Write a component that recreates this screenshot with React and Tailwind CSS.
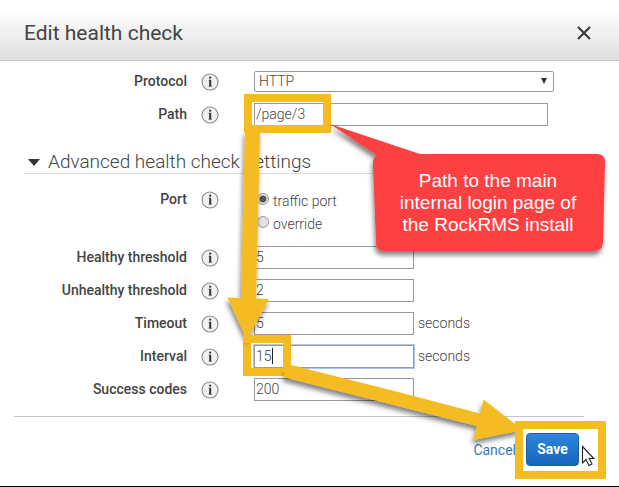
import { useState } from 'react';

function InfoIcon() {
    return (
        <svg viewBox="0 0 18 18" className="ml-[14px] mr-[35px] h-[18px] w-[18px] shrink-0" role="img" aria-label="Info">
            <circle cx="9" cy="9" r="8" fill="#f1f1f1" stroke="#888" strokeWidth="1.1" />
            <path d="M9.200 6.800v6.700" fill="none" stroke="#333" strokeWidth="2" />
            <path d="M7.600 7.300h1.600M7.600 13.200h3.300" fill="none" stroke="#555" strokeWidth="0.8" />
            <circle cx="9.2" cy="4.7" r="1.1" fill="#333" />
        </svg>
    );
}

function Row({ label, id, children }) {
    return (
        <div className="flex h-[33px] items-center">
            <label htmlFor={id} className="w-[187px] shrink-0 pb-0.5 text-right font-medium text-[#444]">
                {label}
            </label>
            <InfoIcon />
            {children}
        </div>
    );
}

const inputStyle = 'h-[23px] border border-[#999] bg-white pb-0.5 pl-px font-light text-[#444] outline-none';

function NumberRow({ label, id, value, unit, active }) {
    return (
        <Row label={label} id={id}>
            <input
                id={id}
                type="text"
                defaultValue={value}
                className={inputStyle + ' w-[160px]' + (active ? ' border-[#5b8fc4] ring-1 ring-[#a9c8e6]' : '')}
            />
            {unit && <span className="ml-1 pb-0.5 font-light text-[#444]">{unit}</span>}
        </Row>
    );
}

function PortOption({ value, port, onChange }) {
    return (
        <label className="flex h-[23px] items-center gap-1 font-light text-[#444]">
            <input
                type="radio"
                name="port"
                value={value}
                checked={port === value}
                onChange={() => onChange(value)}
                className="mb-1 ml-[3px] h-3 w-3 appearance-none rounded-full border border-[#999] bg-[#e4e4e4] checked:bg-[radial-gradient(circle,#555_0_3px,#e8e8e8_4px)]"
            />
            {value}
        </label>
    );
}

// Highlights, arrows and callout drawn on top of the dialog
function Annotations() {
    return (
        <div className="pointer-events-none absolute left-0 top-0">
            <svg width="619" height="487" viewBox="0 0 619 487" className="block">
                <defs>
                    <filter id="shadow" x="-20%" y="-20%" width="140%" height="140%">
                        <feDropShadow dx="-1" dy="4" stdDeviation="2.5" floodColor="#000" floodOpacity="0.5" />
                    </filter>
                </defs>
                <path d="M272.5 348v16" stroke="#222" strokeWidth="1" />
                <g fill="none" stroke="#f4bc20" strokeWidth="8">
                    <rect x="248" y="98" width="79" height="31" />
                    <rect x="247" y="339" width="40" height="33" />
                    <rect x="519" y="425" width="83" height="50" />
                </g>
                <g fill="#f4bc20" filter="url(#shadow)">
                    <path d="M245 131h15L256 298.500 269 299 247 340 227.500 297.500 241 298z" />
                    <path d="M289 364.500 400 392.500 480 413.500 483.500 399.500 523 430 473 440 477 426 283 377z" />
                </g>
                <g fill="none" stroke="#f4bc20" strokeWidth="8">
                    <path d="M244 129H331M243 339H260M287 339v33M519 421v28" />
                </g>
                <path
                    d="M330 124 420 154H597Q605 154 605 162L603 243Q602 251 594 251H384Q376 251 376 243L373 163Q373 157 377 155.500z"
                    fill="#fd4143"
                    filter="url(#shadow)"
                />
                <path
                    d="M582.500 446.500v16.500l3.500-3.500 3 6 3-1.500-2.800-5.500h4.600z"
                    fill="#fff"
                    stroke="#222"
                    strokeWidth="1.1"
                />
            </svg>
            <p className="absolute left-[373px] top-[170px] w-[230px] text-center font-['Liberation_Sans',Arial,sans-serif] text-[19px] leading-[22px] text-white">
                Path to the main<br />internal login page of<br />the RockRMS install
            </p>
        </div>
    );
}

export default function App() {
    const [port, setPort] = useState('traffic port');

    return (
        <div className="relative overflow-hidden bg-black pb-px font-[Roboto,sans-serif] text-[14px] leading-5">
            <div className="rounded-t-[3px] bg-white">
                <header className="flex h-[61px] items-center justify-between border-b border-[#c4c4c4] bg-linear-to-b from-white from-15% to-[#dfdfdf] pl-6 pr-[27px] pt-1.5">
                    <h1 className="text-[21px] leading-7 text-[#444]">Edit health check</h1>
                    <button type="button" aria-label="Close" className="p-px">
                        <svg viewBox="0 0 14 14" className="h-[14px] w-[14px]">
                            <path d="M1 1l12 12M13 1L1 13" stroke="#3c3c3c" strokeWidth="2.2" />
                        </svg>
                    </button>
                </header>

                <form onSubmit={(e) => e.preventDefault()}>
                    <div className="pt-1">
                        <Row label="Protocol" id="protocol">
                            <div className="relative">
                                <select
                                    id="protocol"
                                    className="block h-[21px] w-[300px] appearance-none rounded-xs border border-[#999] bg-white px-1 pb-0.5 leading-[18px] font-light text-[#444] outline-none"
                                >
                                    <option>HTTP</option>
                                    <option>HTTPS</option>
                                    <option>TCP</option>
                                </select>
                                <svg viewBox="0 0 6 6" className="pointer-events-none absolute right-[7px] top-[7px] h-1.5 w-1.5">
                                    <path d="M0 0h6L3 6z" fill="#333" />
                                </svg>
                            </div>
                        </Row>
                        <Row label="Path" id="path">
                            <input id="path" type="text" defaultValue="/page/3" className={inputStyle + ' w-[294px]'} />
                        </Row>
                    </div>

                    <h2 className="mx-6 mt-5 flex h-[23px] items-center border-b border-[#ddd] text-[19px] font-light text-[#444]">
                        <svg viewBox="0 0 12 7" className="ml-1 mr-2 h-[7px] w-3">
                            <path d="M0 0h12L6 7z" fill="#333" />
                        </svg>
                        Advanced health check settings
                    </h2>

                    <div role="radiogroup" aria-labelledby="port-label" className="mb-1.5 mt-[15px] flex h-[46px]">
                        <span id="port-label" className="w-[187px] shrink-0 text-right font-medium text-[#444]">Port</span>
                        <span className="pt-0.5">
                            <InfoIcon />
                        </span>
                        <div>
                            <PortOption value="traffic port" port={port} onChange={setPort} />
                            <PortOption value="override" port={port} onChange={setPort} />
                        </div>
                    </div>

                    <NumberRow label="Healthy threshold" id="healthy" value="5" />
                    <NumberRow label="Unhealthy threshold" id="unhealthy" value="2" />
                    <NumberRow label="Timeout" id="timeout" value="5" unit="seconds" />
                    <NumberRow label="Interval" id="interval" value="15" unit="seconds" active />
                    <NumberRow label="Success codes" id="codes" value="200" />

                    <footer className="ml-[14px] mr-[35px] mt-[10px] flex items-center justify-end gap-2.5 border-t border-[#c4c4c4] pb-5 pr-[5px] pt-4">
                        <a href="#" className="text-[#3d75b5]">Cancel</a>
                        <button
                            type="submit"
                            className="h-[33px] w-[53px] rounded-[4px] border border-[#1c5ba6] bg-linear-to-b from-[#2d86dc] to-[#1666bd] pb-0.5 font-bold text-white"
                        >
                            Save
                        </button>
                    </footer>
                </form>
            </div>
            <Annotations />
        </div>
    );
}
